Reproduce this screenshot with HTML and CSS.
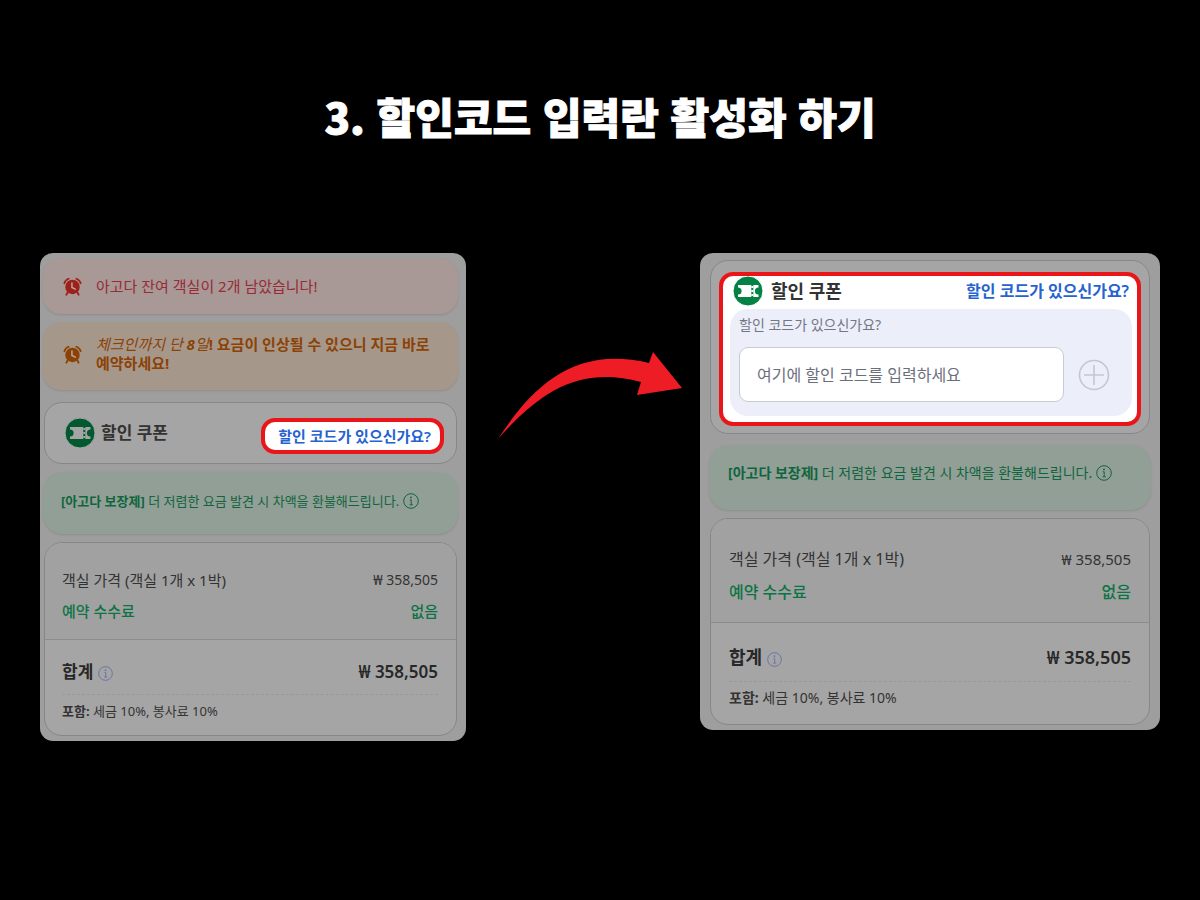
FILE: index.html
```html
<!DOCTYPE html>
<html lang="ko">
<head>
    <meta charset="UTF-8">
    <meta name="viewport" content="width=device-width, initial-scale=1.0">
    <title>할인코드 입력란 활성화 하기</title>
    <link rel="stylesheet" href="styles.css">
</head>
<body>

<!-- shared icons -->
<svg class="sprite" aria-hidden="true">
    <symbol id="icon-alarm" viewBox="0 0 20 20">
        <circle cx="10" cy="10.5" r="7.6" fill="currentColor"/>
        <path d="M1.4 6.6 Q2.4 3 6 1.8 M14 1.8 Q17.6 3 18.6 6.6" fill="none" stroke="currentColor" stroke-width="1.8" stroke-linecap="round"/>
        <path d="M5 16 L3.6 18.6 M15 16 L16.4 18.6" stroke="currentColor" stroke-width="2" stroke-linecap="round"/>
        <path d="M9.4 6.2 V11 L13 12.8" fill="none" stroke="#b5a5a1" stroke-width="1.6" stroke-linecap="round"/>
    </symbol>
    <symbol id="icon-coupon" viewBox="0 0 30 30">
        <circle cx="15" cy="15" r="15" fill="currentColor"/>
        <path class="ticket" d="M5 9 H18.3 V21 H5 V18.6 A3.6 3.6 0 0 0 5 11.4 Z"/>
        <path class="ticket" d="M20.3 9 H25.5 V11.4 A3.6 3.6 0 0 0 25.5 18.6 V21 H20.3 Z"/>
        <path class="ticket-line" d="M19.3 10 V20" stroke-width="2" stroke-dasharray="2 2"/>
    </symbol>
    <symbol id="icon-info" viewBox="0 0 16 16">
        <circle cx="8" cy="8" r="7.3" fill="none" stroke="currentColor" stroke-width="1"/>
        <path d="M6.8 6.8 H8.2 V11.6 M6.6 11.8 H9.8" fill="none" stroke="currentColor" stroke-width="1"/>
        <circle cx="8" cy="4.4" r="0.9" fill="currentColor"/>
    </symbol>
</svg>

<h1 class="title">3. 할인코드 입력란 활성화 하기</h1>

<main class="steps">
    <section class="panel panel-before">
        <div class="alert alert-red">
            <svg class="alarm"><use href="#icon-alarm"/></svg>
            <p>아고다 잔여 객실이 2개 남았습니다!</p>
        </div>
        <div class="alert alert-orange">
            <svg class="alarm"><use href="#icon-alarm"/></svg>
            <p><em>체크인까지 단 </em><em class="days">8</em><em>일</em><b>! 요금이 인상될 수 있으니 지금 바로 예약하세요!</b></p>
        </div>
        <div class="card coupon">
            <h2 class="coupon-title"><svg class="coupon-icon"><use href="#icon-coupon"/></svg>할인 쿠폰</h2>
            <a class="coupon-link highlight" href="#code">할인 코드가 있으신가요?</a>
        </div>
        <div class="guarantee">
            <p><b>[아고다 보장제]</b> 더 저렴한 요금 발견 시 차액을 환불해드립니다. <svg class="info"><use href="#icon-info"/></svg></p>
        </div>
        <div class="card price">
            <div class="price-detail">
                <div class="row"><span>객실 가격 (객실 1개 x 1박)</span><span class="amount">₩ 358,505</span></div>
                <div class="row fee"><span>예약 수수료</span><span>없음</span></div>
            </div>
            <div class="price-total">
                <div class="row total"><span>합계 <svg class="info"><use href="#icon-info"/></svg></span><span class="amount">₩ 358,505</span></div>
                <p class="included"><b>포함:</b> 세금 10%, 봉사료 10%</p>
            </div>
        </div>
    </section>

    <svg class="arrow" viewBox="0 0 234 100" aria-hidden="true">
        <path d="M32 94 C66 42 108 0 183 18 L187 7 L216 43 L171 50 L175 37 C112 20 73 48 32 94 Z" fill="#ee1c25"/>
    </svg>

    <section class="panel panel-after">
        <div class="card coupon-open">
            <div class="highlight">
                <div class="coupon-head">
                    <h2 class="coupon-title"><svg class="coupon-icon"><use href="#icon-coupon"/></svg>할인 쿠폰</h2>
                    <a class="coupon-link" href="#code">할인 코드가 있으신가요?</a>
                </div>
                <form class="code-form" onsubmit="return false;">
                    <label for="code">할인 코드가 있으신가요?</label>
                    <div class="code-row">
                        <input type="text" id="code" placeholder="여기에 할인 코드를 입력하세요">
                        <button class="add" type="submit" aria-label="추가">
                            <svg viewBox="0 0 32 32"><circle cx="16" cy="16" r="14.5"/><path d="M16 6 V26 M6 16 H26"/></svg>
                        </button>
                    </div>
                </form>
            </div>
        </div>
        <div class="guarantee">
            <p><b>[아고다 보장제]</b> 더 저렴한 요금 발견 시 차액을 환불해드립니다. <svg class="info"><use href="#icon-info"/></svg></p>
        </div>
        <div class="card price">
            <div class="price-detail">
                <div class="row"><span>객실 가격 (객실 1개 x 1박)</span><span class="amount">₩ 358,505</span></div>
                <div class="row fee"><span>예약 수수료</span><span>없음</span></div>
            </div>
            <div class="price-total">
                <div class="row total"><span>합계 <svg class="info"><use href="#icon-info"/></svg></span><span class="amount">₩ 358,505</span></div>
                <p class="included"><b>포함:</b> 세금 10%, 봉사료 10%</p>
            </div>
        </div>
    </section>
</main>

</body>
</html>
```
FILE: styles.css
```css
* {
    box-sizing: border-box;
}

body {
    margin: 0;
    padding: 84px 40px 40px;
    min-height: 100vh;
    background-color: #000;
    color: #333;
    font-family: "Noto Sans", "Noto Sans CJK KR", sans-serif;
    font-size: 15px;
    line-height: 20px;
}

h1, h2, p {
    margin: 0;
}

a {
    text-decoration: none;
}

.sprite {
    display: none;
}

.title {
    margin-bottom: 105px;
    color: #fff;
    font-family: "Noto Sans CJK KR", sans-serif;
    font-size: 42px;
    font-weight: 900;
    line-height: 64px;
    text-align: center;
    -webkit-text-stroke: 1px #fff;
}

.steps {
    display: grid;
    grid-template-columns: 426fr 234fr 460fr;
    align-items: start;
}

.arrow {
    width: 100%;
    margin-top: 92px;
}

/* panels */
.panel {
    display: flex;
    flex-direction: column;
    gap: 8px;
    border-radius: 13px;
    background-color: #9e9e9e;
}

.panel-before {
    padding: 5px 8px 5px 3px;
}

.panel-after {
    padding: 7px 9px 5px;
    font-size: 16px;
}

.card {
    margin: 0 1px;
    border: 1px solid #868789;
    border-radius: 18px;
    background-color: #a5a5a5;
}

.highlight {
    border: 4px solid #ea1518;
    border-radius: 14px;
    background-color: #fff;
}

/* alerts */
.alert {
    display: flex;
    align-items: center;
    gap: 14px;
    min-height: 56px;
    padding: 13px 20px 17px;
    border-radius: 18px;
    line-height: 19px;
    box-shadow: 0 1px 2px #8d8d8f;
}

.alert-red {
    padding-bottom: 13px;
    background-color: #a89896;
    color: #982b36;
}

.alert-orange {
    background-color: #a6978b;
    color: #8c4204;
}

.days {
    font-weight: 700;
}

.alarm {
    flex: none;
    width: 19px;
    height: 19px;
}

.alert-red .alarm {
    color: #9e2119;
}

/* coupon */
.coupon {
    display: flex;
    justify-content: space-between;
    align-items: flex-start;
    margin-top: 4px;
    padding: 15px 12px 9px 20px;
}

.coupon-title {
    display: flex;
    align-items: center;
    gap: 6px;
    font-size: 17px;
    font-weight: 600;
    line-height: 30px;
}

.coupon-icon {
    width: 30px;
    height: 30px;
    color: #00592f;
    fill: #a5a5a5;
    stroke: #a5a5a5;
}

.coupon-icon circle, .ticket {
    stroke: none;
}

.coupon-link {
    color: #2563d0;
    font-weight: 600;
}

.coupon .coupon-link {
    padding: 4px 9px 4px 13px;
}

.coupon-open {
    padding: 11px 8px 7px;
}

.coupon-open .highlight {
    padding: 0 5px 6px 7px;
}

.coupon-head {
    display: flex;
    justify-content: space-between;
    align-items: center;
    padding: 0 3px;
}

.panel-after .coupon-title {
    gap: 8px;
    font-size: 18px;
}

.panel-after .coupon-icon {
    color: #048144;
    fill: #fff;
    stroke: #fff;
}

.code-form {
    margin-top: 3px;
    padding: 8px 22px 14px 9px;
    border-radius: 18px;
    background-color: #eceffa;
}

.code-form label {
    display: block;
    margin-bottom: 14px;
    color: #737784;
    font-size: 14px;
    line-height: 16px;
}

.code-row {
    display: flex;
    align-items: center;
    gap: 14px;
}

.code-row input {
    flex: 1;
    min-width: 0;
    height: 55px;
    padding: 0 17px;
    border: 1px solid #c8cbd3;
    border-radius: 9px;
    background-color: #fff;
    font: inherit;
}

.code-row input::placeholder {
    color: #6b6f7c;
    opacity: 1;
}

.add {
    width: 32px;
    height: 32px;
    padding: 0;
    border: none;
    background: none;
    cursor: pointer;
}

.add svg {
    display: block;
    fill: none;
    stroke: #c5c7d0;
    stroke-width: 1.6;
}

/* guarantee banner */
.guarantee {
    padding: 19px 18px 23px;
    border-radius: 20px;
    background-color: #929f96;
    color: #10653e;
    font-size: 13px;
    box-shadow: 0 1px 2px #8d8d8f;
}

.panel-after .guarantee {
    margin-top: 3px;
    padding: 18px 19px 27px;
    font-size: 14px;
}

.info {
    width: 16px;
    height: 16px;
    vertical-align: -3px;
}

/* prices */
.row {
    display: flex;
    justify-content: space-between;
}

.price-detail {
    display: grid;
    gap: 11px;
    padding: 27px 18px 18px 17px;
    border-bottom: 1px solid #8b8c8e;
    border-radius: 17px 17px 0 0;
    background-color: #a1a1a1;
}

.amount {
    font-size: 14px;
}

.fee {
    color: #0c7444;
    font-weight: 500;
}

.price-total {
    padding: 22px 18px 14px 17px;
}

.total {
    padding-bottom: 12px;
    border-bottom: 1px dashed #999;
    color: #282828;
    font-size: 17px;
    font-weight: 600;
}

.total .amount {
    font-size: 17px;
}

.total .info {
    width: 15px;
    height: 15px;
    color: #6971a8;
}

.included {
    padding-top: 6px;
    font-size: 13px;
}

.panel-after .price-detail {
    gap: 13px;
    padding: 30px 18px 20px;
}

.panel-after .amount {
    font-size: 15px;
}

.panel-after .price-total {
    padding: 24px 18px 16px;
}

.panel-after .total {
    padding-bottom: 14px;
    font-size: 18px;
}

.panel-after .total .amount {
    font-size: 18px;
}

.panel-after .included {
    font-size: 14px;
}
```
